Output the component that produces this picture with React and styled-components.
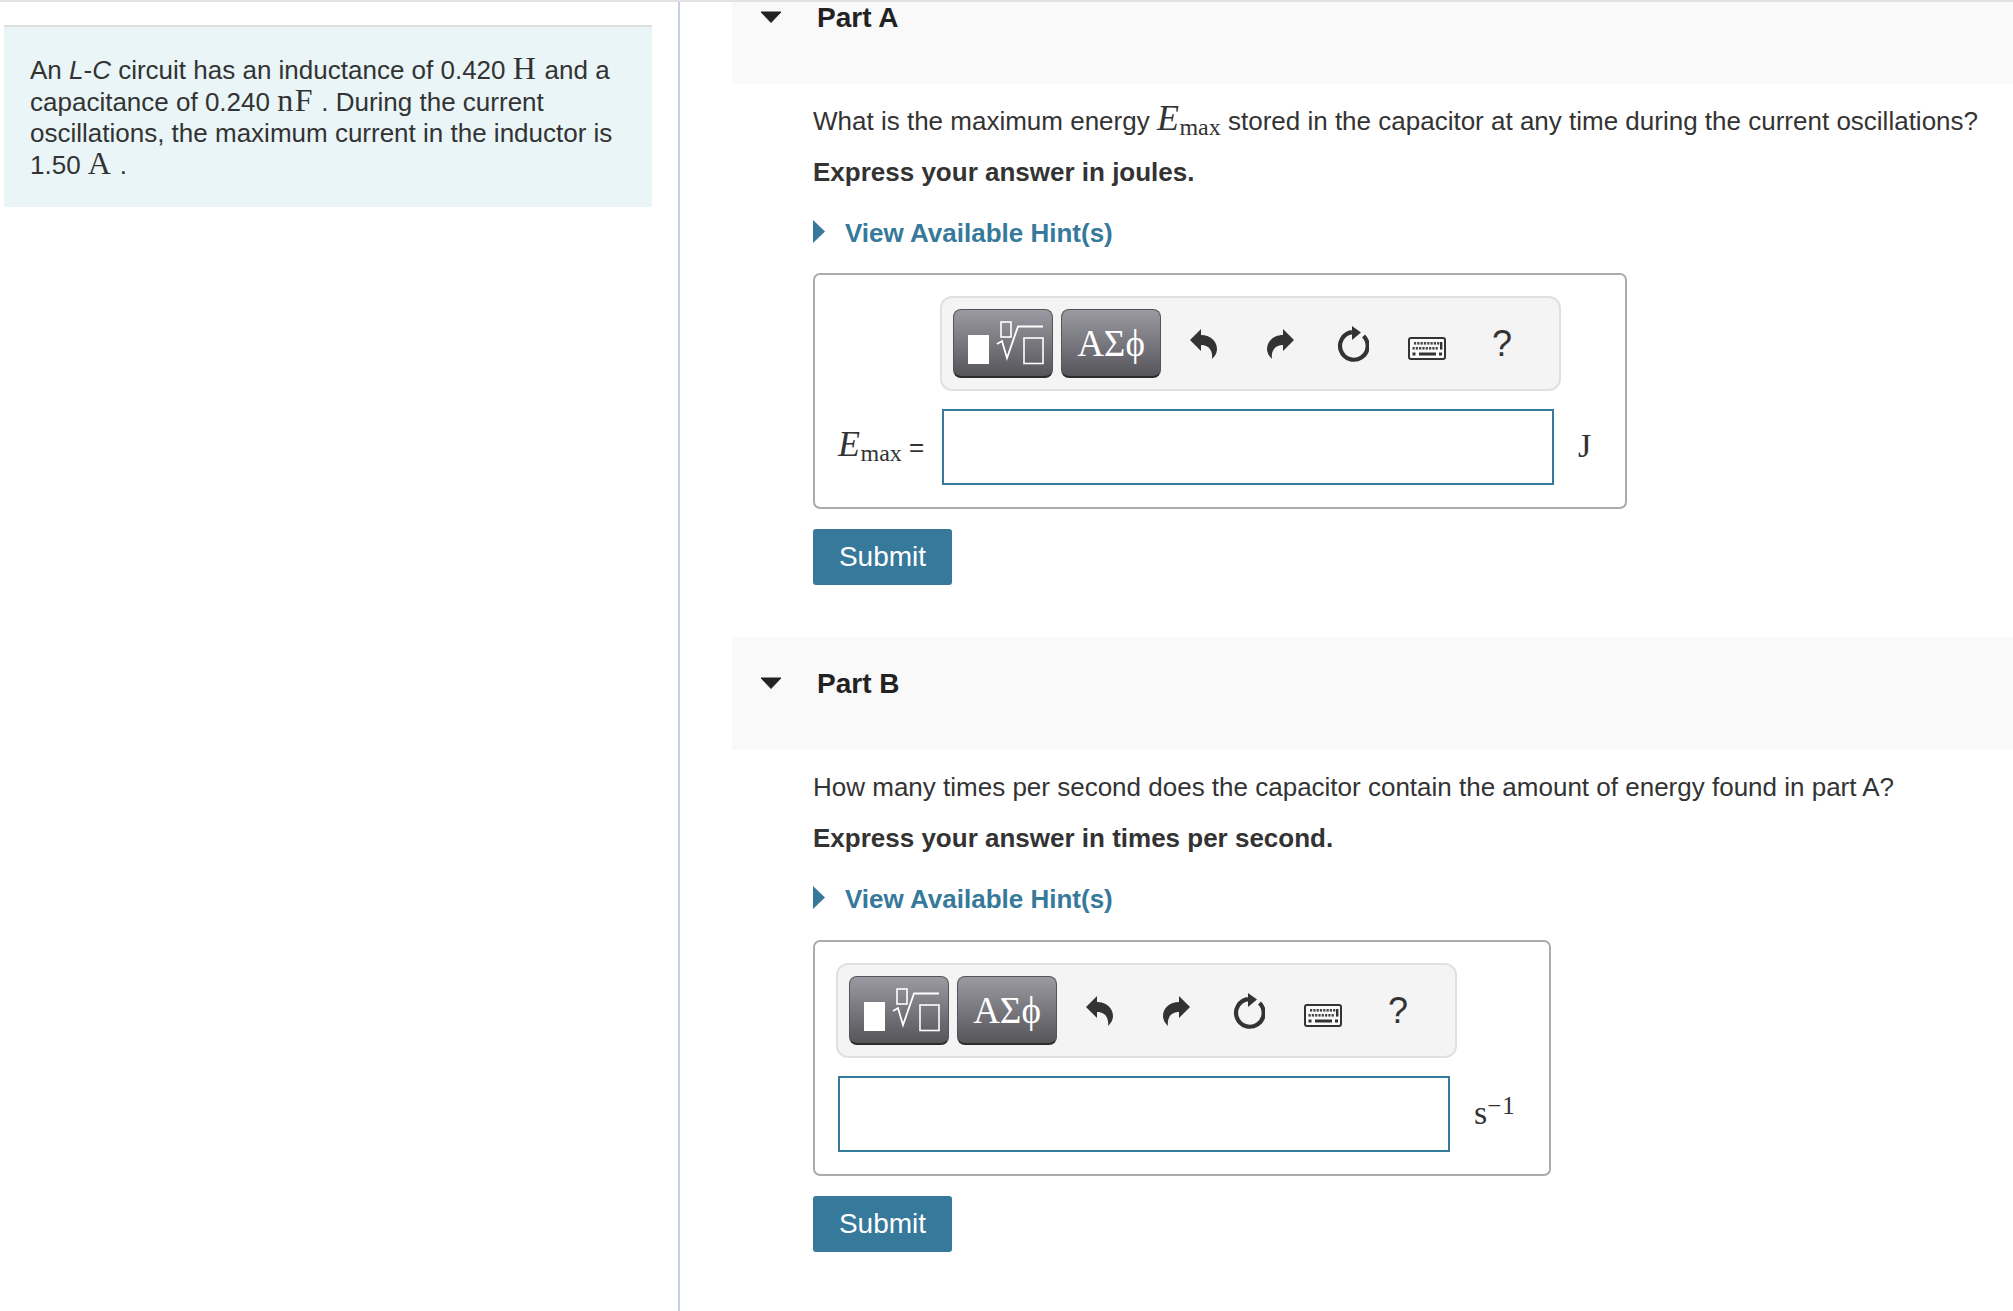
import React from 'react'
import styled, { createGlobalStyle } from 'styled-components'

const GlobalStyle = createGlobalStyle`
  html, body {
    margin: 0;
    padding: 0;
    background: #fff;
    overflow: hidden;
  }
  body {
    font-family: "Liberation Sans", Arial, sans-serif;
    color: #333;
  }
`

const BLUE = '#36799b'

function Triangle() {
  return (
    <TriangleSvg viewBox="0 0 22 12">
      <path d="M1 1 H21 L11 11.5 Z" fill="#222" stroke="#222" strokeLinejoin="round" />
    </TriangleSvg>
  )
}

function HintArrow() {
  return (
    <HintSvg viewBox="0 0 12 23">
      <path d="M0 0 L12 11.5 L0 23 Z" fill={BLUE} />
    </HintSvg>
  )
}

function TemplatesIcon() {
  return (
    <svg width="98" height="66" viewBox="0 0 98 66">
      <rect x="14" y="25" width="21" height="29" fill="#fff" />
      <rect x="47" y="12" width="10" height="15" fill="none" stroke="#fff" strokeWidth="1.6" />
      <path d="M43 34 L48 31 L53 48 L64 16.5 H89" fill="none" stroke="#fff" strokeWidth="1.8" />
      <rect x="70" y="28" width="19" height="25.5" fill="none" stroke="#fff" strokeWidth="1.6" />
    </svg>
  )
}

function UndoIcon({ flip }) {
  return (
    <svg width="27" height="30" viewBox="0 0 27 30" style={flip ? { transform: 'scaleX(-1)' } : undefined}>
      <path
        d="M0 11 L11 0 V6 C20 6 27 12 27 20 C27 24 25 27 22 30 C23 23 20 16 11 16 V22 Z"
        fill="#333"
      />
    </svg>
  )
}

function ResetIcon() {
  return (
    <svg width="32" height="36" viewBox="0 0 32 36">
      <path d="M15 6.2 A13.8 13.8 0 1 0 26.5 10" fill="none" stroke="#333" strokeWidth="4.2" />
      <path d="M15 0 L24 6.5 L15 14 Z" fill="#333" />
    </svg>
  )
}

function KeyboardIcon() {
  const keys = []
  for (let i = 0; i < 8; i++) {
    keys.push(<rect key={'a' + i} x={6 + i * 3.3} y="5" width="2.2" height="2.6" fill="#444" />)
    keys.push(<rect key={'b' + i} x={4.5 + i * 3.3} y="10" width="2.2" height="2.6" fill="#444" />)
  }
  return (
    <svg width="38" height="23" viewBox="0 0 38 23">
      <rect x="1" y="1" width="36" height="21" rx="2" fill="#fafafa" stroke="#333" strokeWidth="2" />
      {keys}
      <rect x="4.5" y="15.5" width="3" height="3" fill="#333" />
      <rect x="11" y="15.5" width="17" height="3" fill="#333" />
      <rect x="31" y="15.5" width="3" height="3" fill="#333" />
      <rect x="32" y="5" width="2.4" height="7.6" fill="#333" />
    </svg>
  )
}

function Toolbar({ $left }) {
  return (
    <ToolbarWrap $left={$left}>
      <ToolButton>
        <TemplatesIcon />
      </ToolButton>
      <ToolButton>
        <Greek>ΑΣϕ</Greek>
      </ToolButton>
      <IconCell $w={69}>
        <UndoIcon />
      </IconCell>
      <IconCell $w={85}>
        <UndoIcon flip />
      </IconCell>
      <IconCell $w={59}>
        <ResetIcon />
      </IconCell>
      <IconCell $w={90} $drop={10}>
        <KeyboardIcon />
      </IconCell>
      <IconCell $w={60}>
        <Help>?</Help>
      </IconCell>
    </ToolbarWrap>
  )
}

function Part({ name, headHeight, headPad, question, instruction, label, unit, boxWidth, boxGap, toolbarLeft }) {
  return (
    <section>
      <PartHead $height={headHeight} $pad={headPad}>
        <Triangle />
        <PartTitle>{name}</PartTitle>
      </PartHead>
      <PartBody>
        <Question>{question}</Question>
        <Instruction>{instruction}</Instruction>
        <HintRow>
          <HintArrow />
          <HintLink>View Available Hint(s)</HintLink>
        </HintRow>
        <AnswerBox $width={boxWidth} $gap={boxGap}>
          <Toolbar $left={toolbarLeft} />
          <InputRow>
            {label && <InputLabel>{label}</InputLabel>}
            <AnswerInput />
            <Unit>{unit}</Unit>
          </InputRow>
        </AnswerBox>
        <SubmitButton>Submit</SubmitButton>
      </PartBody>
    </section>
  )
}

export default function App() {
  return (
    <>
      <GlobalStyle />
      <Page>
        <LeftColumn>
          <IntroPanel>
            An <em>L</em>-<em>C</em> circuit has an inductance of 0.420 <MathUnit>H</MathUnit> and a capacitance of 0.240{' '}
            <MathUnit>nF</MathUnit> . During the current oscillations, the maximum current in the inductor is 1.50{' '}
            <MathUnit>A</MathUnit> .
          </IntroPanel>
        </LeftColumn>
        <RightColumn>
          <Part
            name="Part A"
            headHeight={82}
            headPad={0}
            question={
              <>
                What is the maximum energy <MathVar>E</MathVar>
                <MathSub>max</MathSub> stored in the capacitor at any time during the current oscillations?
              </>
            }
            instruction="Express your answer in joules."
            label={
              <>
                <MathVar>E</MathVar>
                <MathSub>max</MathSub> =
              </>
            }
            unit={<UnitText>J</UnitText>}
            boxWidth={814}
            boxGap={22}
            toolbarLeft={125}
          />
          <Part
            name="Part B"
            headHeight={113}
            headPad={31}
            question="How many times per second does the capacitor contain the amount of energy found in part A?"
            instruction="Express your answer in times per second."
            unit={
              <UnitText>
                s<UnitSup>−1</UnitSup>
              </UnitText>
            }
            boxWidth={738}
            boxGap={23}
            toolbarLeft={21}
          />
        </RightColumn>
      </Page>
    </>
  )
}

const Page = styled.div`
  display: grid;
  grid-template-columns: 680px 1fr;
  height: 1311px;
  border-top: 2px solid #e2e2e2;
  box-sizing: border-box;
`

const LeftColumn = styled.aside`
  border-right: 2px solid #c5d0e0;
  padding: 23px 0 0 4px;
  box-sizing: border-box;
`

const IntroPanel = styled.div`
  width: 648px;
  height: 182px;
  box-sizing: border-box;
  background: #e9f5f7;
  border-top: 2px solid #dedede;
  padding: 28px 26px 0;
  font-size: 26px;
  line-height: 31.7px;
  color: #333;

  em {
    font-style: italic;
  }
`

const MathUnit = styled.span`
  font-family: "Liberation Serif", serif;
  font-size: 32px;
  line-height: 0;
  letter-spacing: 1.5px;
`

const MathVar = styled.i`
  font-family: "Liberation Serif", serif;
  font-size: 36px;
  line-height: 0;
  letter-spacing: 0.5px;
`

const MathSub = styled.sub`
  font-family: "Liberation Serif", serif;
  font-size: 24px;
  line-height: 0;
  vertical-align: -5px;
`

const RightColumn = styled.main`
  padding-left: 52px;
  min-width: 0;
`

const PartHead = styled.header`
  display: flex;
  align-items: flex-start;
  height: ${p => p.$height}px;
  padding: ${p => p.$pad}px 0 0 28px;
  box-sizing: border-box;
  background: #f9f9f9;
`

const TriangleSvg = styled.svg`
  width: 22px;
  height: 12px;
  margin-top: 9px;
`

const PartTitle = styled.h2`
  margin: 0 0 0 35px;
  font-size: 28px;
  line-height: 32px;
  font-weight: 700;
  color: #222;
`

const PartBody = styled.div`
  padding: 19px 0 52px 81px;
`

const Question = styled.p`
  margin: 0;
  font-size: 26px;
  line-height: 36px;
  white-space: nowrap;
`

const Instruction = styled.p`
  margin: 15px 0 0;
  font-size: 26px;
  line-height: 36px;
  font-weight: 700;
`

const HintRow = styled.div`
  display: flex;
  align-items: center;
  margin-top: 25px;
  height: 36px;
`

const HintSvg = styled.svg`
  width: 12px;
  height: 23px;
  margin-top: -4px;
`

const HintLink = styled.a`
  margin-left: 20px;
  font-size: 26px;
  font-weight: 700;
  color: ${BLUE};
`

const AnswerBox = styled.div`
  width: ${p => p.$width}px;
  height: 236px;
  margin-top: ${p => p.$gap}px;
  padding-top: 21px;
  box-sizing: border-box;
  border: 2px solid #ababab;
  border-radius: 7px;
`

const ToolbarWrap = styled.div`
  display: flex;
  align-items: center;
  width: 621px;
  height: 95px;
  margin-left: ${p => p.$left}px;
  padding-left: 11px;
  box-sizing: border-box;
  background: #f4f4f4;
  border: 2px solid #e0e0e0;
  border-radius: 12px;
`

const ToolButton = styled.div`
  display: flex;
  align-items: center;
  justify-content: center;
  flex: none;
  width: 100px;
  height: 69px;
  margin-right: 8px;
  box-sizing: border-box;
  background: linear-gradient(#9b9aa2, #55555a);
  border: 1px solid #555;
  border-bottom: 2px solid #2c2c2c;
  border-radius: 8px;
`

const Greek = styled.span`
  font-family: "Liberation Serif", serif;
  font-size: 37px;
  color: #fff;
`

const IconCell = styled.div`
  display: flex;
  align-items: center;
  justify-content: center;
  flex: none;
  width: ${p => p.$w}px;
  margin-top: ${p => p.$drop || 0}px;
`

const Help = styled.span`
  font-size: 36px;
  color: #333;
`

const InputRow = styled.div`
  display: flex;
  align-items: center;
  margin: 18px 0 0 23px;
`

const InputLabel = styled.label`
  width: 104px;
  font-size: 26px;
  white-space: nowrap;
`

const AnswerInput = styled.input`
  width: 612px;
  height: 76px;
  box-sizing: border-box;
  border: 2px solid ${BLUE};
  border-radius: 0;
  background: #fff;
  outline: none;
`

const Unit = styled.div`
  margin-left: 24px;
  margin-top: -2px;
`

const UnitText = styled.span`
  font-family: "Liberation Serif", serif;
  font-size: 34px;
  color: #333;
`

const UnitSup = styled.sup`
  font-size: 25px;
  line-height: 0;
  letter-spacing: 1px;
  vertical-align: 10px;
`

const SubmitButton = styled.button`
  display: block;
  width: 139px;
  height: 56px;
  margin-top: 20px;
  padding: 0;
  background: ${BLUE};
  color: #fff;
  font-family: "Liberation Sans", Arial, sans-serif;
  font-size: 28px;
  border: 0;
  border-radius: 3px;
`
